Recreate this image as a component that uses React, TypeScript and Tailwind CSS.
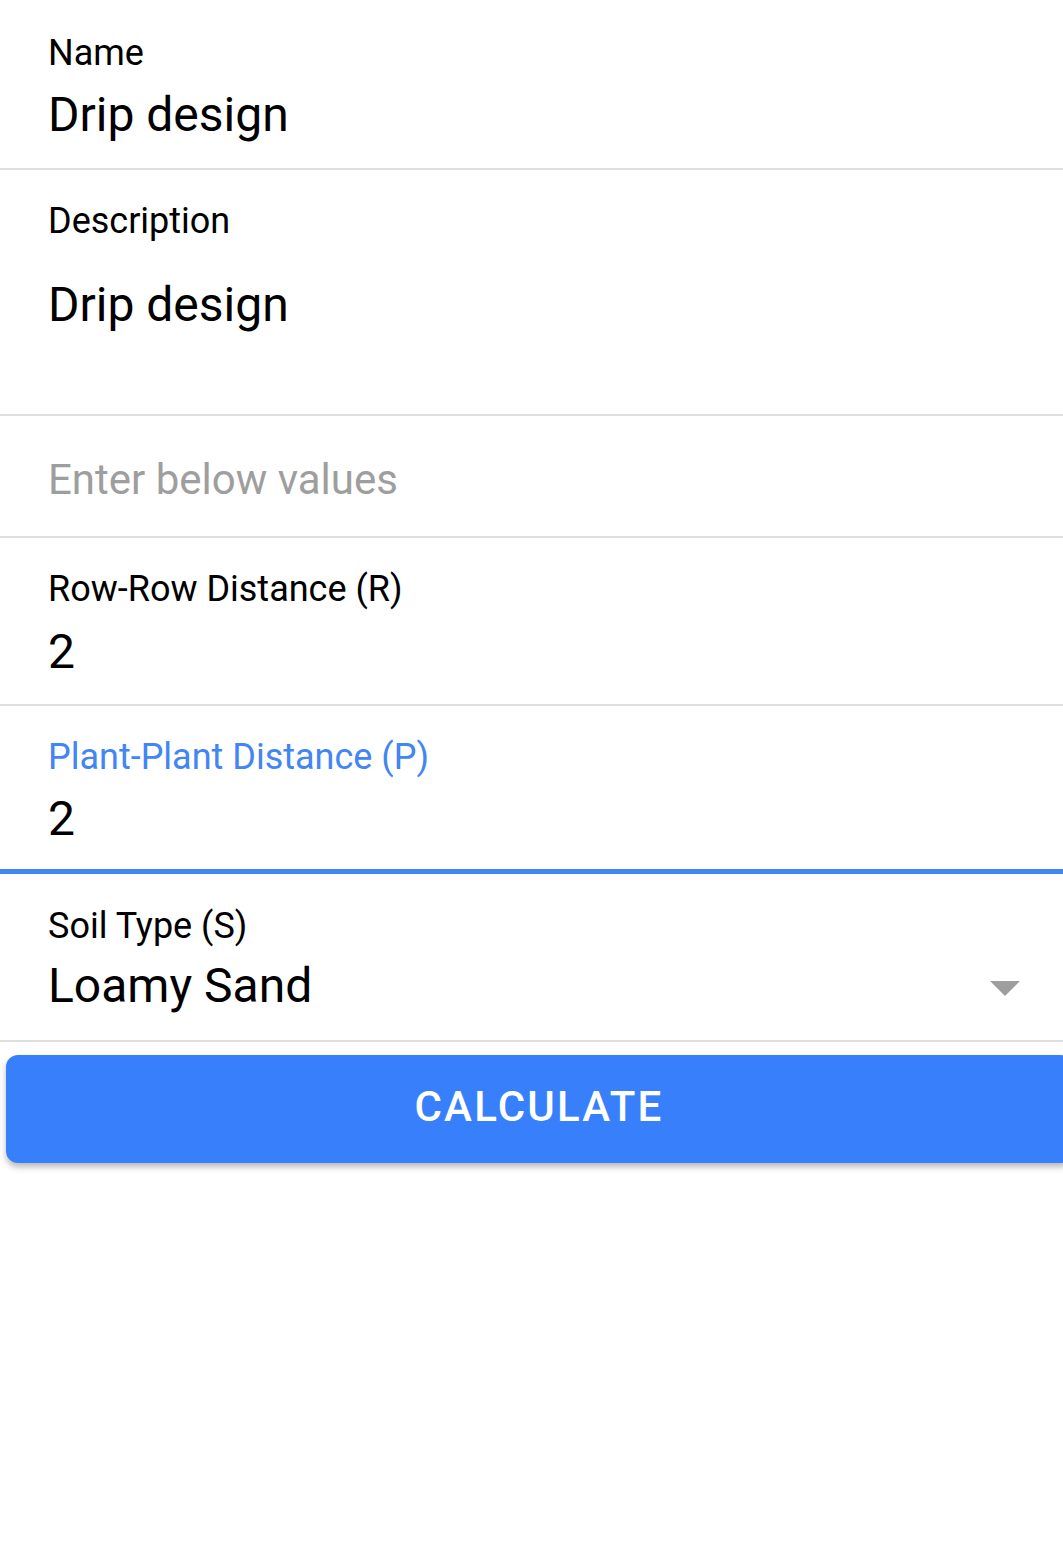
import React from 'react';

const font = { fontFamily: 'Roboto, "Noto Sans", sans-serif' };

const Divider: React.FC<{ focused?: boolean }> = ({ focused }) =>
  focused ? <div className="h-[5px] w-full bg-[#4285f4]" /> : <div className="h-[2px] w-full bg-[#dedede]" />;

const App: React.FC = () => {
  return (
    <div className="w-[1063px] min-h-[1559px] bg-white overflow-hidden text-black" style={font}>
      {/* Name */}
      <section className="pl-[48px] pt-[35px] pb-[29px]">
        <div className="text-[36px] leading-none">Name</div>
        <div className="mt-[20px] text-[48px] leading-none">Drip design</div>
      </section>
      <Divider />

      {/* Description */}
      <section className="pl-[48px] pt-[33px] pb-[85px]">
        <div className="text-[36px] leading-none">Description</div>
        <div className="mt-[42px] text-[48px] leading-none">Drip design</div>
      </section>
      <Divider />

      <section className="pl-[48px] pt-[43px] pb-[35px]">
        <div className="text-[42px] leading-none text-[#9e9e9e]">Enter below values</div>
      </section>
      <Divider />

      {/* Row-Row */}
      <section className="pl-[48px] pt-[33px] pb-[28px]">
        <div className="text-[36px] leading-none">Row-Row Distance (R)</div>
        <div className="mt-[21px] text-[48px] leading-none">2</div>
      </section>
      <Divider />

      {/* Plant-Plant (focused) */}
      <section className="pl-[48px] pt-[33px] pb-[26px]">
        <div className="text-[36px] leading-none text-[#4285f4]">Plant-Plant Distance (P)</div>
        <div className="mt-[20px] text-[48px] leading-none">2</div>
      </section>
      <Divider focused />

      {/* Soil type select */}
      <section className="pl-[48px] pr-[43px] pt-[34px] pb-[29px]">
        <div className="text-[36px] leading-none">Soil Type (S)</div>
        <div className="mt-[17px] flex items-center justify-between">
          <span className="text-[48px] leading-[50px]">Loamy Sand</span>
          <svg width="30" height="15" viewBox="0 0 30 15" className="mt-[4px]">
            <path d="M0 0 L30 0 L15 15 Z" fill="#9e9e9e" />
          </svg>
        </div>
      </section>
      <Divider />

      <div className="pt-[13px] pl-[6px]">
        <button className="w-[1066px] h-[108px] pb-[5px] rounded-[12px] bg-[#3880fb] text-white text-[42px] font-medium tracking-[2.2px] shadow-[0_4px_6px_rgba(0,0,0,0.28)] flex items-center justify-center">
          CALCULATE
        </button>
      </div>
    </div>
  );
};

export default App;
